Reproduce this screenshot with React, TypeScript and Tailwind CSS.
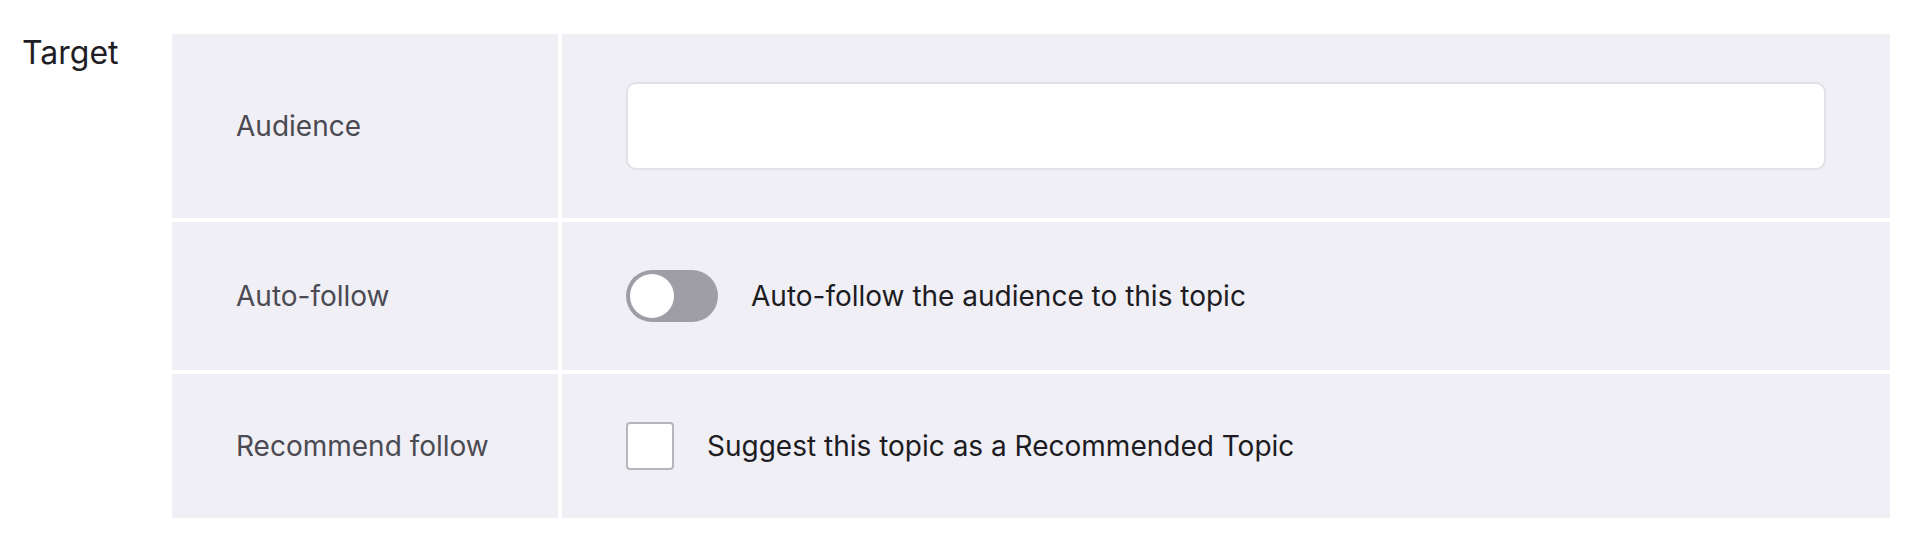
import React from "react";

const font = { fontFamily: "Inter, 'Noto Sans', sans-serif" };

function Row({ label, children }: { label: string; children: React.ReactNode }) {
  return (
    <>
      <div className="flex items-center bg-[#f0eff5] pl-[64px] text-[28px] leading-[40px] text-[#4b4a52]">
        {label}
      </div>
      <div className="flex items-center bg-[#f0eff5] px-[64px] py-[48px]">{children}</div>
    </>
  );
}

export default function App() {
  return (
    <div className="w-[1914px] h-[540px] bg-white" style={font}>
      <div className="flex pt-[34px] pr-[24px]">
        <div className="w-[172px] shrink-0 pl-[22px] text-[32px] leading-[38px] text-[#1f1e24]">Target</div>
        <div className="grid flex-1 grid-cols-[386px_1fr] gap-[4px]">
          <Row label="Audience">
            <input
              type="text"
              className="h-[88px] w-full rounded-[10px] border-2 border-[#e2e1e9] bg-white px-4 text-[28px] outline-none"
            />
          </Row>
          <Row label="Auto-follow">
            <div className="flex items-center gap-[33px]">
              <div className="flex h-[52px] w-[92px] items-center rounded-full bg-[#9f9ea7] p-[4px]">
                <div className="h-[44px] w-[44px] rounded-full bg-white" />
              </div>
              <span className="text-[28px] leading-[40px] text-[#1d1c22]">Auto-follow the audience to this topic</span>
            </div>
          </Row>
          <Row label="Recommend follow">
            <div className="flex items-center gap-[33px]">
              <div className="h-[48px] w-[48px] rounded-[4px] border-2 border-[#b6b5bd] bg-white" />
              <span className="text-[28px] leading-[40px] text-[#1d1c22]">Suggest this topic as a Recommended Topic</span>
            </div>
          </Row>
        </div>
      </div>
    </div>
  );
}
